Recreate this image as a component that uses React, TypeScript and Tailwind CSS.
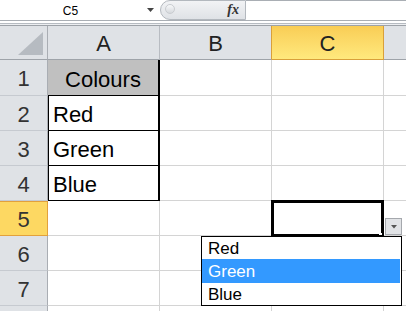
import React from 'react'

const cols = ['A', 'B', 'C']
const rows = [1, 2, 3, 4, 5, 6, 7, 8]

const cellText: Record<number, string> = { 2: 'Red', 3: 'Green', 4: 'Blue' }

function RowHeader({ n }: { n: number }) {
  const active = n === 5
  const h = n === 1 ? 'h-[36px]' : 'h-[35px]'
  return (
    <div
      className={`w-[48px] ${h} flex items-center justify-center pt-[3px] text-[22px] leading-none text-[#333] border-r ${
        active
          ? 'bg-[#fdd862] border-r-[#e2a13c] border-b border-b-[#e2a13c] shadow-[inset_0_1px_0_#e2a13c]'
          : 'bg-[#dfe2e6] border-r-[#a9adb3] border-b border-b-[#c6cad0]'
      }`}
    >
      {n < 8 ? n : null}
    </div>
  )
}

function ColACell({ n }: { n: number }) {
  const h = n === 1 ? 'h-[36px]' : 'h-[35px]'
  if (n === 1) {
    return (
      <div className={`w-[112px] ${h} bg-[#c0c0c0] border-r-2 border-b border-black flex items-end justify-center pb-[4px] text-[22px] leading-none text-black`}>
        Colours
      </div>
    )
  }
  if (n <= 4) {
    return (
      <div className={`w-[112px] ${h} bg-white border-r-2 border-b border-black shadow-[inset_1px_0_0_#000] flex items-end pl-[5px] pb-[4px] text-[22px] leading-none text-black`}>
        {cellText[n]}
      </div>
    )
  }
  return <div className={`w-[112px] ${h} border-r border-b border-[#d4d4d4]`} />
}

export default function App() {
  return (
    <div className="relative w-[406px] h-[311px] overflow-hidden bg-white font-['Liberation_Sans',Arial,sans-serif]">
      {/* Formula bar */}
      <div className="flex h-[21px] border-b border-[#a9aeb4]">
        <div className="w-[141px] flex items-center justify-center pt-[1px] text-[12px] text-black">C5</div>
        <div className="w-[19px] flex items-center justify-center">
          <svg width="7" height="4" viewBox="0 0 7 4">
            <polygon points="0,0 7,0 3.5,4" fill="#444" />
          </svg>
        </div>
        <div className="relative w-[86px] h-[20px] rounded-l-[10px] border border-r border-[#b3b8be] bg-gradient-to-b from-[#f2f3f5] to-[#dfe2e6] flex items-center justify-end pr-[6px]">
          <div className="absolute left-[4px] top-[3px] w-[10px] h-[10px] rounded-full border border-[#c9ccd0] bg-gradient-to-b from-[#f8f9fa] to-[#d6d9dd]" />
          <span className="font-['Liberation_Serif',serif] italic font-bold text-[14px] leading-none text-[#333]">fx</span>
        </div>
        <div className="flex-1 border-t border-[#a9aeb4]" />
      </div>
      <div className="h-[2px] bg-white" />
      <div className="h-[1px] bg-[#b6bbc1]" />
      <div className="h-[1px] bg-[#eceef1]" />

      {/* Column headers */}
      <div className="flex h-[35px] border-t border-[#9da2a8]">
        <div className="relative w-[48px] h-[34px] bg-[#dfe2e6] border-r border-b border-r-[#a9adb3] border-b-[#9ea3a9]">
          <svg className="absolute left-0 top-0" width="47" height="33" viewBox="0 0 47 33">
            <polygon points="43,6 43,29 18,29" fill="#b6bbc1" />
          </svg>
        </div>
        {cols.map((c) => (
          <div
            key={c}
            className={`w-[112px] h-[34px] flex items-center justify-center pt-[3px] text-[22px] leading-none text-[#222] border-r border-b ${
              c === 'C'
                ? 'bg-gradient-to-b from-[#f9cd55] to-[#ffe97d] border-[#d9a03a]'
                : c === 'B'
                ? 'bg-[#dfe2e6] border-r-[#d9a03a] border-b-[#9ea3a9]'
                : 'bg-[#dfe2e6] border-r-[#b8bcc2] border-b-[#9ea3a9]'
            }`}
          >
            {c}
          </div>
        ))}
        <div className="flex-1 h-[34px] bg-[#dfe2e6] border-b border-[#9ea3a9]" />
      </div>

      {/* Rows */}
      {rows.map((n) => {
        const h = n === 1 ? 'h-[36px]' : 'h-[35px]'
        return (
          <div key={n} className="flex">
            <RowHeader n={n} />
            <ColACell n={n} />
            <div className={`w-[112px] ${h} border-r border-b border-[#d4d4d4]`} />
            <div className={`w-[112px] ${h} border-r border-b border-[#d4d4d4]`} />
            <div className={`flex-1 ${h} border-b border-[#d4d4d4]`} />
          </div>
        )
      })}

      {/* Active cell C5 */}
      <div className="absolute left-[271px] top-[200px] w-[113px] h-[37px] border-[3px] border-black" />
      <div className="absolute left-[379px] top-[233px] w-[3px] h-[2px] bg-white" />

      {/* Validation dropdown button */}
      <div className="absolute left-[385px] top-[218px] w-[17px] h-[17px] border border-[#a5a8ad] bg-[#e1e3e6] flex items-center justify-center">
        <svg width="6" height="4" viewBox="0 0 6 4">
          <polygon points="0,0 6,0 3,3.5" fill="#555" />
        </svg>
      </div>

      {/* Dropdown list */}
      <div className="absolute left-[201px] top-[236px] w-[201px] border border-black bg-white text-[17px] text-black">
        <div className="h-[22px] leading-[22px] pl-[6px] pt-[1px]">Red</div>
        <div className="h-[24px] leading-[24px] pl-[6px] pt-[1px] mr-[1px] bg-[#3399ff] text-white">Green</div>
        <div className="h-[22px] leading-[22px] pl-[6px] pt-[1px]">Blue</div>
      </div>
    </div>
  )
}
